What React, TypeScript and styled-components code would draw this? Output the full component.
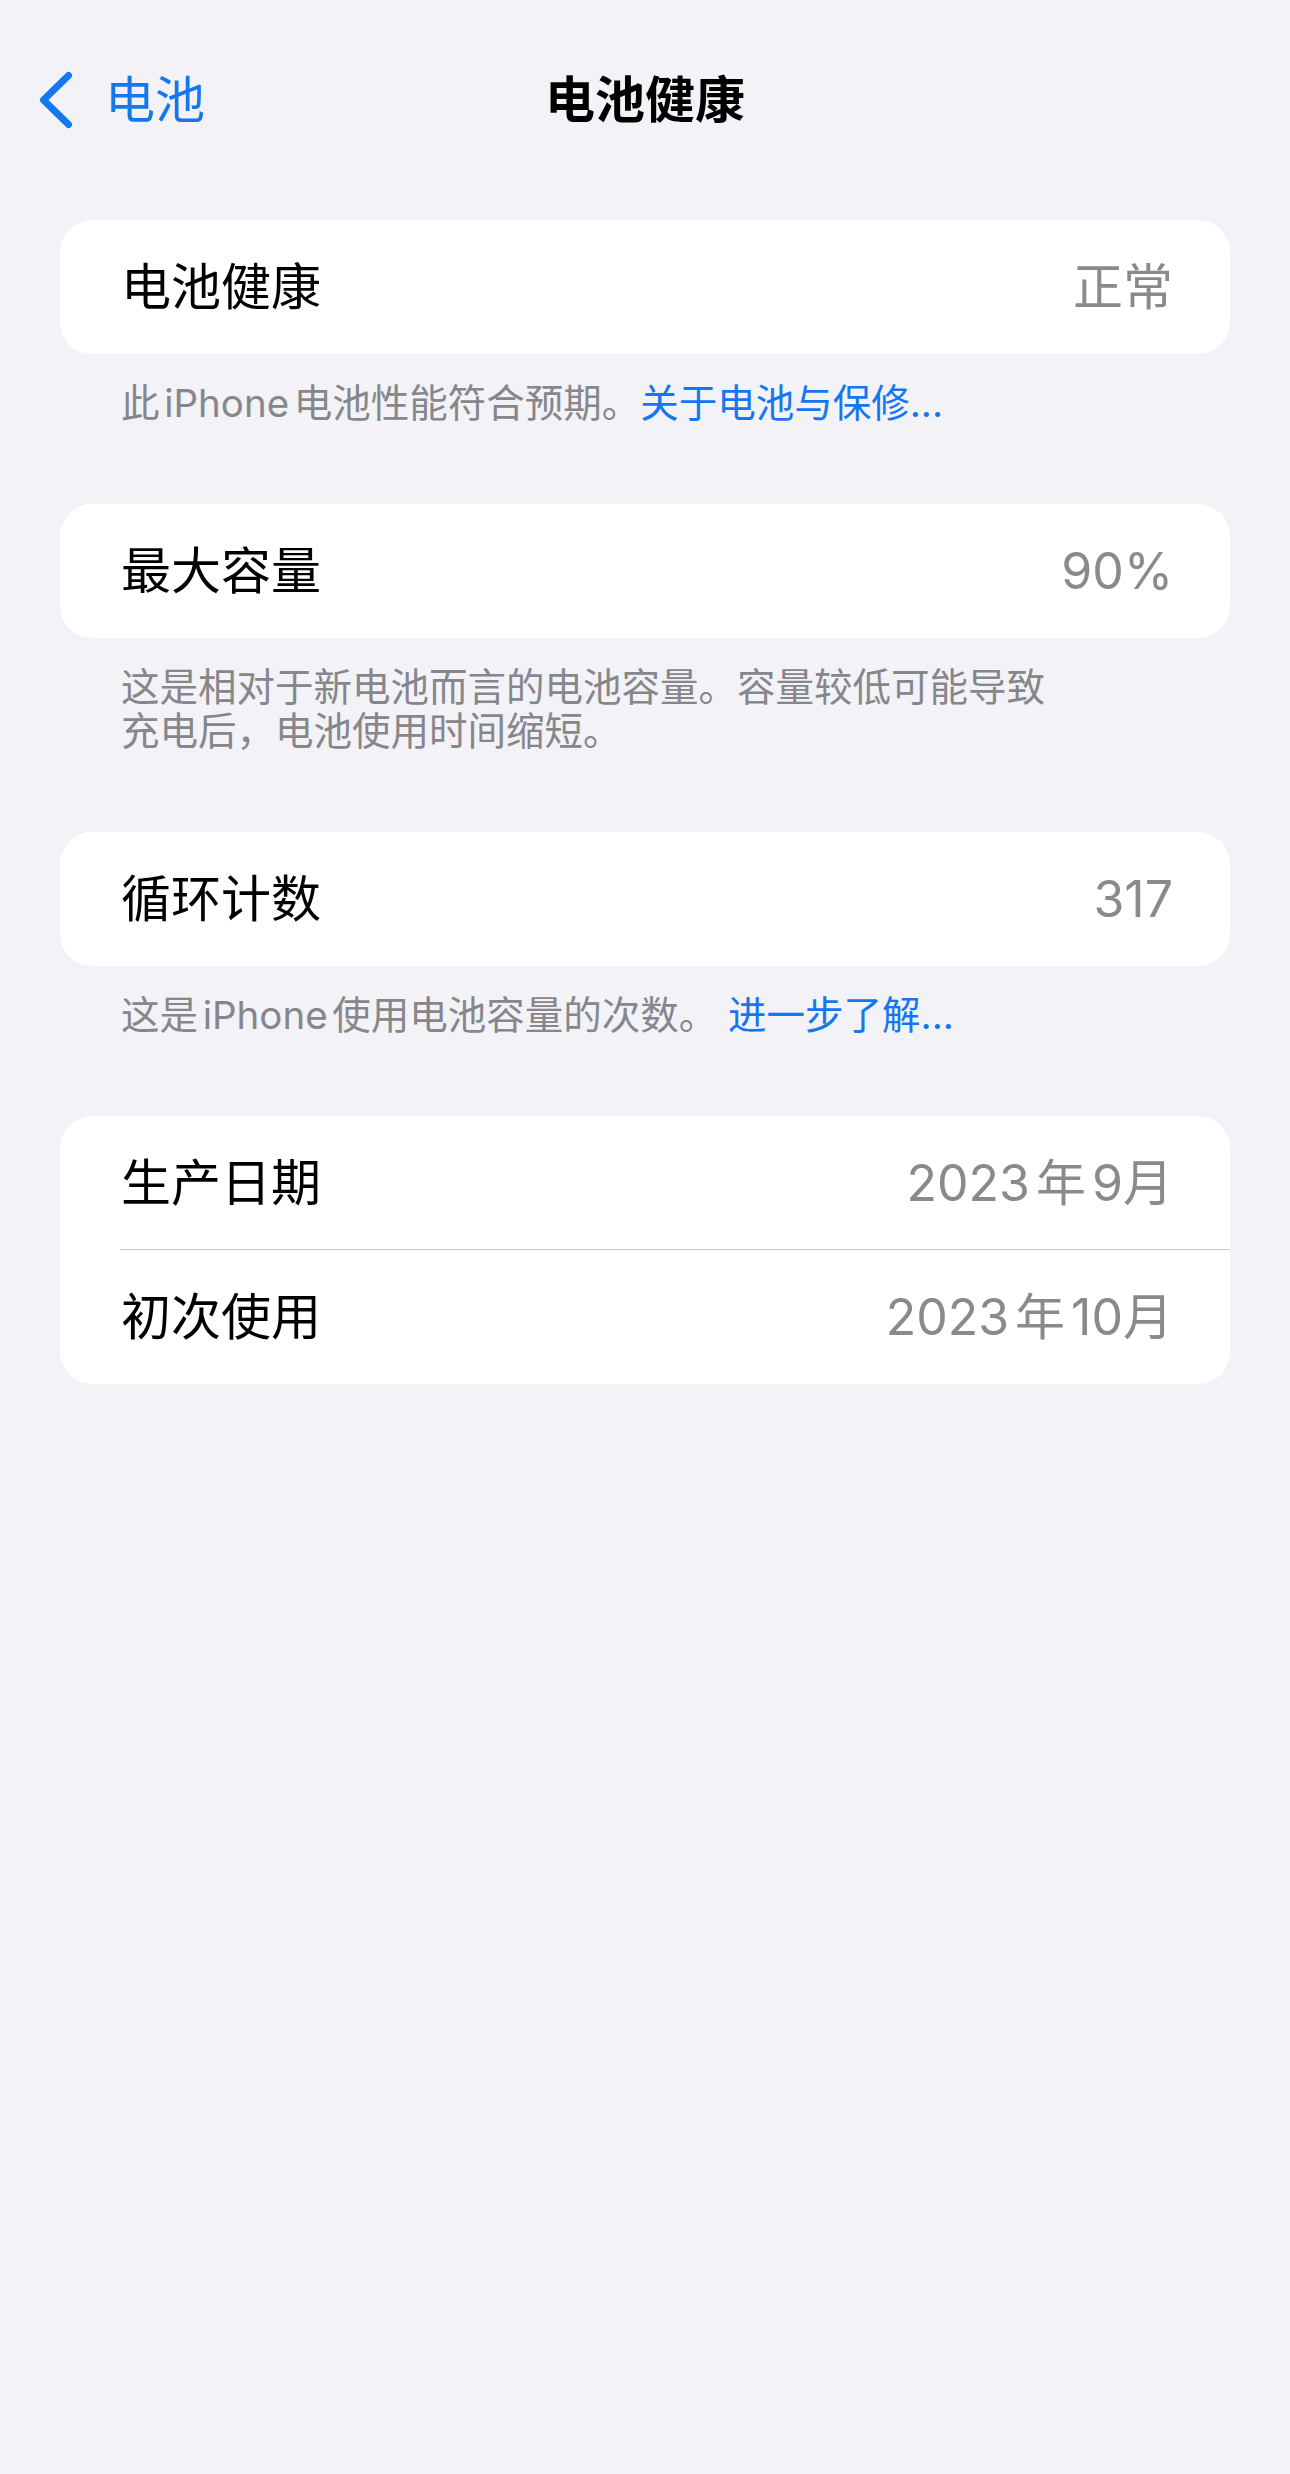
import React from "react";
import styled, { createGlobalStyle } from "styled-components";

const GlobalStyle = createGlobalStyle`
  html, body {
    margin: 0;
    padding: 0;
    background: #f2f2f7;
  }
  body {
    font-family: Inter, "Noto Sans CJK SC", sans-serif;
    -webkit-font-smoothing: antialiased;
  }
`;

const Screen = styled.div`
  min-height: 2474px;
  background: #f2f2f7;
  display: flex;
  flex-direction: column;
`;

const NavBar = styled.header`
  height: 200px;
  display: grid;
  grid-template-columns: 1fr auto 1fr;
  align-items: center;
`;

const BackButton = styled.a`
  display: flex;
  align-items: center;
  gap: 32px;
  padding-left: 39px;
  color: #1477f0;
  font-size: 50px;
  line-height: 1;
  text-decoration: none;
  justify-self: start;
`;

const Title = styled.h1`
  margin: 0;
  font-size: 50px;
  font-weight: 700;
  color: #000;
  line-height: 1;
`;

const Content = styled.main`
  padding: 20px 60px 0;
  display: flex;
  flex-direction: column;
  gap: 79px;
`;

const Section = styled.section`
  display: flex;
  flex-direction: column;
`;

const Card = styled.div`
  background: #fff;
  border-radius: 32px;
  overflow: hidden;
`;

const Row = styled.div<{ $divider?: boolean }>`
  height: 134px;
  display: flex;
  align-items: center;
  justify-content: space-between;
  padding: 0 57px 0 61px;
  position: relative;
  &::after {
    content: "";
    display: ${(p) => (p.$divider ? "block" : "none")};
    position: absolute;
    left: 60px;
    right: 0;
    bottom: 0;
    height: 1.5px;
    background: #c8c8cc;
  }
`;

const Label = styled.span`
  font-size: 50px;
  color: #000;
  line-height: 1;
`;

const Value = styled.span`
  font-size: 50px;
  color: #8a8a8e;
  line-height: 1;
`;

const Footer = styled.p`
  margin: 0;
  padding: 27px 61px 0;
  font-size: 38.5px;
  line-height: 44px;
  color: #86868b;
`;

const Link = styled.a`
  color: #1477f0;
  text-decoration: none;
`;

const Latin = styled.span`
  margin: 0 0.12em;
`;

const Chevron = () => (
  <svg width="34" height="58" viewBox="0 0 34 58" aria-hidden="true">
    <path
      d="M29.5 4.5 L4.5 29 L29.5 53.5"
      fill="none"
      stroke="#1477f0"
      strokeWidth="7"
      strokeLinecap="round"
      strokeLinejoin="round"
    />
  </svg>
);

export default function App() {
  return (
    <>
      <GlobalStyle />
      <Screen>
        <NavBar>
          <BackButton href="#">
            <Chevron />
            电池
          </BackButton>
          <Title>电池健康</Title>
          <div />
        </NavBar>

        <Content>
          <Section>
            <Card>
              <Row>
                <Label>电池健康</Label>
                <Value>正常</Value>
              </Row>
            </Card>
            <Footer>
              此<Latin>iPhone</Latin>电池性能符合预期。
              <Link href="#">关于电池与保修...</Link>
            </Footer>
          </Section>

          <Section>
            <Card>
              <Row>
                <Label>最大容量</Label>
                <Value>90%</Value>
              </Row>
            </Card>
            <Footer>
              这是相对于新电池而言的电池容量。容量较低可能导致
              <br />
              充电后，电池使用时间缩短。
            </Footer>
          </Section>

          <Section>
            <Card>
              <Row>
                <Label>循环计数</Label>
                <Value>317</Value>
              </Row>
            </Card>
            <Footer>
              这是<Latin>iPhone</Latin>使用电池容量的次数。{" "}
              <Link href="#">进一步了解...</Link>
            </Footer>
          </Section>

          <Section>
            <Card>
              <Row $divider>
                <Label>生产日期</Label>
                <Value>
                  2023<Latin>年</Latin>9月
                </Value>
              </Row>
              <Row>
                <Label>初次使用</Label>
                <Value>
                  2023<Latin>年</Latin>10月
                </Value>
              </Row>
            </Card>
          </Section>
        </Content>
      </Screen>
    </>
  );
}
